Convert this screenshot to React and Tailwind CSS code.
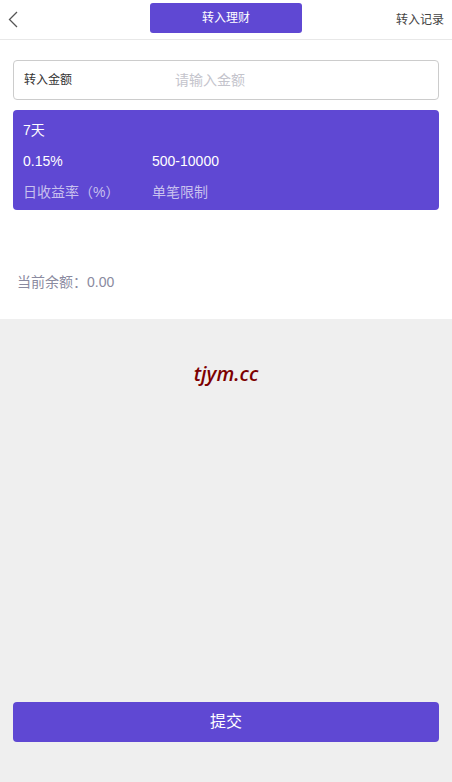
import { useState } from 'react';

const font = { fontFamily: '"Liberation Sans", "Noto Sans CJK SC", sans-serif' };

export default function App() {
  const [amount, setAmount] = useState('');

  return (
    <div className="w-[452px] h-[782px] bg-[#efefef] flex flex-col" style={font}>
      {/* Header */}
      <div className="h-10 bg-white border-b border-[#e8e8e8] flex items-center px-2 relative">
        <svg width="10" height="17" viewBox="0 0 10 17">
          <path d="M9 1 L1.5 8.5 L9 16" fill="none" stroke="#555" strokeWidth="1.3" />
        </svg>
        <div className="absolute left-[150px] top-[3px] w-[152px] h-[30px] rounded-[3px] bg-[#5f48d3] flex items-center justify-center text-white text-[12px]">
          转入理财
        </div>
        <span className="ml-auto text-[12px] text-[#444]">转入记录</span>
      </div>

      {/* Form */}
      <div className="bg-white px-[13px] pt-5 pb-[26px]">
        <label className="h-10 border border-[#ccc] rounded-[4px] flex items-center px-[10px]">
          <span className="w-[151px] text-[12px] text-[#333]">转入金额</span>
          <input
            value={amount}
            onChange={(e) => setAmount(e.target.value)}
            placeholder="请输入金额"
            className="flex-1 text-[14px] outline-none placeholder:text-[#c4c4cc] bg-transparent"
          />
        </label>

        <div className="mt-[10px] h-[100px] rounded-[4px] bg-[#5f48d3] px-[10px] pt-[10px] flex flex-col gap-[10px] text-[14px] leading-[21px]">
          <div className="text-white">7天</div>
          <div className="flex text-white">
            <span className="w-[129px]">0.15%</span>
            <span>500-10000</span>
          </div>
          <div className="flex text-[#c8c0ee]">
            <span className="w-[129px]">日收益率（%）</span>
            <span>单笔限制</span>
          </div>
        </div>

        <div className="mt-[62px] px-1 text-[14px] text-[#8a8aa0]">当前余额：0.00</div>
      </div>

      {/* Watermark */}
      <div className="flex justify-center pt-[40px]">
        <span className="text-[20px] italic font-semibold text-[#7d0000]" style={{ fontFamily: '"Open Sans", sans-serif' }}>
          tjym.cc
        </span>
      </div>

      {/* Submit */}
      <div className="mt-auto px-[13px] pb-[40px]">
        <button className="w-full h-10 rounded-[4px] bg-[#5f48d3] text-white text-[16px]">提交</button>
      </div>
    </div>
  );
}
